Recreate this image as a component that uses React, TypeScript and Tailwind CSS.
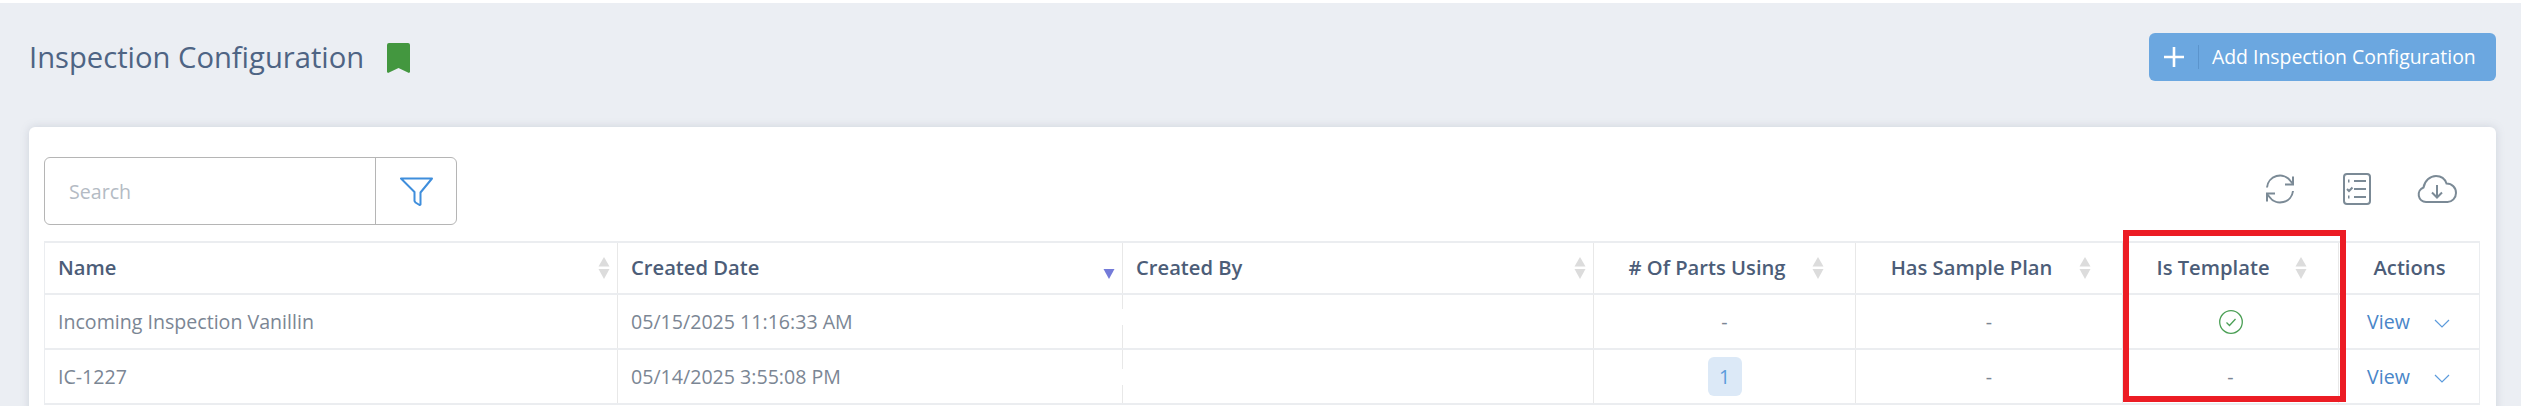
import { ReactNode } from 'react';

const SortIcon = ({ active = false }: { active?: boolean }) =>
  active ? (
    <svg className="w-[12px] h-[24px] shrink-0" viewBox="0 0 12 24">
      <path d="M0.5 13h11L6 23z" fill="#747bd9" />
    </svg>
  ) : (
    <svg className="w-[12px] h-[24px] shrink-0" viewBox="0 0 12 24">
      <path d="M6 1l5.5 9.5H.5z" fill="#dcdcdc" />
      <path d="M.5 13h11L6 23z" fill="#dcdcdc" />
    </svg>
  );

const Chevron = () => (
  <svg className="w-[16px] h-[9px] mt-[3px]" viewBox="0 0 16 9" fill="none" stroke="#5c9bdc" strokeWidth="1.2">
    <path d="M1 1l7 7 7-7" />
  </svg>
);

function LeftHead({ label, active }: { label: string; active?: boolean }) {
  return (
    <div className="flex items-center justify-between pl-[13px] pr-[7px] border-r border-[#e8e8e8] last:border-r-0">
      <span className="-mt-[1px]">{label}</span>
      <SortIcon active={active} />
    </div>
  );
}

function CenterHead({ label }: { label: string }) {
  return (
    <div className="flex items-center pl-[8px] pr-[31px] border-r border-[#e8e8e8]">
      <span className="flex-1 text-center -mt-[1px]">{label}</span>
      <SortIcon />
    </div>
  );
}

const Cell = ({ children, center }: { children?: ReactNode; center?: boolean }) => (
  <div className={`flex items-center border-r border-[#e8e8e8] ${center ? 'justify-center' : 'pl-[13px]'}`}>{children}</div>
);

function Row({ name, date, gapClass, parts, check }: { name: string; date: string; gapClass: string; parts: ReactNode; check: ReactNode }) {
  return (
    <div className="grid grid-cols-[573px_505px_471px_262px_267px_216px_141px] h-[55px] border-b-2 border-[#ebedf0] text-[#7b8694] text-[19.6px]">
      <Cell>{name}</Cell>
      <Cell>{date}</Cell>
      <div className="flex items-center border-r border-[#e8e8e8]">
        <div className={`w-[3px] h-[16px] -ml-[2px] bg-white ${gapClass}`} />
      </div>
      <Cell center>{parts}</Cell>
      <Cell center>-</Cell>
      <Cell center>{check}</Cell>
      <div className="flex items-center pl-[28px] gap-[24px] text-[#4a86c8]">
        <span>View</span>
        <Chevron />
      </div>
    </div>
  );
}

export default function App() {
  return (
    <div className="h-[406px] overflow-hidden bg-white pt-[3px] font-['Open_Sans',sans-serif] text-[20px]">
      <div className="h-[403px] bg-[#ebeef3] pl-[29px] pr-[25px] pt-[30px]">
        {/* Page title */}
        <div className="flex items-center justify-between h-[48px]">
          <div className="flex items-center gap-[23px] pt-[2px]">
            <h1 className="text-[29.2px] text-[#4e6484] leading-none">Inspection Configuration</h1>
            <svg className="w-[23px] h-[30px]" viewBox="0 0 23 30">
              <path d="M2 0h19a2 2 0 0 1 2 2v27l-1 1-10.500-5L1 30l-1-1V2a2 2 0 0 1 2-2z" fill="#43973f" />
            </svg>
          </div>
          <button className="flex items-center h-[48px] w-[347px] rounded-[6px] bg-[#6ba7e0] text-white text-[19.4px] pl-[15px]">
            <svg className="w-[20px] h-[20px]" viewBox="0 0 20 20" stroke="#fff" strokeWidth="2.600">
              <path d="M10 0v20M0 10h20" />
            </svg>
            <span className="w-px h-[24px] bg-[#5b94cc] ml-[14px] mr-[13px]" />
            <span>Add Inspection Configuration</span>
          </button>
        </div>

        {/* Card */}
        <div className="mt-[46px] h-[300px] bg-white rounded-t-[6px] shadow-[0_0_8px_rgba(120,130,150,0.25)] pt-[30px] pl-[15px] pr-[16px]">
          <div className="flex items-center justify-between h-[68px]">
            <div className="flex h-[68px] w-[413px] rounded-[6px] border border-[#b5b5b5]">
              <div className="flex-1 flex items-center pl-[24px] pt-[2px] text-[#b4bbc4] text-[19.6px]">Search</div>
              <div className="w-[81px] flex items-center justify-center border-l border-[#b5b5b5]">
                <svg className="w-[33px] h-[29px]" viewBox="0 0 33 29" fill="none" stroke="#3f8edc" strokeWidth="2" strokeLinejoin="round">
                  <path d="M1 1.500h31L20.500 15.500V27.500l-1 .5-4-2.500-1-1.500v-9z" />
                </svg>
              </div>
            </div>
            <div className="flex items-center text-[#7b8a96] -mt-[4px] mr-[23px]">
              <svg className="w-[30px] h-[30px] mr-[48px]" viewBox="0 0 30 30" fill="none" stroke="currentColor" strokeWidth="2">
                <path d="M2 13.500A13 13 0 0 1 25.500 7l2 2.500M28 17a13 13 0 0 1-23.500 6L2.500 20.500" />
                <path d="M28 2.500v8h-8M2 27.500v-8h8" />
              </svg>
              <svg className="w-[28px] h-[32px] mr-[46px]" viewBox="0 0 28 32" fill="none" stroke="currentColor" strokeWidth="2">
                <rect x="1" y="1" width="26" height="30" rx="3" />
                <path d="M11 8h12M11 16h12M11 24h12" />
                <path d="M5 8h1.500M5 24h1.500" strokeWidth="3" />
                <path d="M4 16l2 2 3.500-3.500" />
              </svg>
              <svg className="w-[40px] h-[28px]" viewBox="0 0 40 28" fill="none" stroke="currentColor" strokeWidth="2">
                <path d="M9 27a7.500 7.500 0 0 1-2.500-14.500C7.500 6 13 1 19 1c5 0 9 3 10.500 7.500C35 8.500 39 12.500 39 18c0 5-4 9-8.500 9z" />
                <path d="M20 10v12M15 17.500l5 5 5-5" />
              </svg>
            </div>
          </div>

          {/* Table */}
          <div className="relative mt-[16px] w-[2436px] border-l border-r border-t-2 border-[#ebedf0] text-[20px]">
            <div className="grid grid-cols-[573px_505px_471px_262px_267px_216px_141px] h-[52px] border-b-2 border-[#ebedf0] font-semibold text-[#4c5d78] text-[20.2px]">
              <LeftHead label="Name" />
              <LeftHead label="Created Date" active />
              <LeftHead label="Created By" />
              <CenterHead label="# Of Parts Using" />
              <CenterHead label="Has Sample Plan" />
              <CenterHead label="Is Template" />
              <div className="flex items-center justify-center -mt-[1px]">Actions</div>
            </div>
            <Row
              name="Incoming Inspection Vanillin"
              date="05/15/2025 11:16:33 AM"
              gapClass="-mt-[10px]"
              parts="-"
              check={
                <svg className="w-[24px] h-[24px]" viewBox="0 0 24 24" fill="none" stroke="#4b9f55" strokeWidth="1.300">
                  <circle cx="12" cy="12" r="11.300" />
                  <path d="M7.500 12.500l3 3 6-6.500" />
                </svg>
              }
            />
            <Row
              name="IC-1227"
              date="05/14/2025 3:55:08 PM"
              gapClass="mt-0"
              parts={
                <span className="flex items-center justify-center w-[34px] h-[39px] rounded-[6px] bg-[#dce9f7] text-[#5b9bdb]">1</span>
              }
              check="-"
            />
            {/* Highlight drawn on top of the Is Template column */}
            <div className="absolute left-[2078px] top-[-13px] w-[223px] h-[172px] border-[6px] border-[#ec1c24] pointer-events-none" />
          </div>
        </div>
      </div>
    </div>
  );
}
